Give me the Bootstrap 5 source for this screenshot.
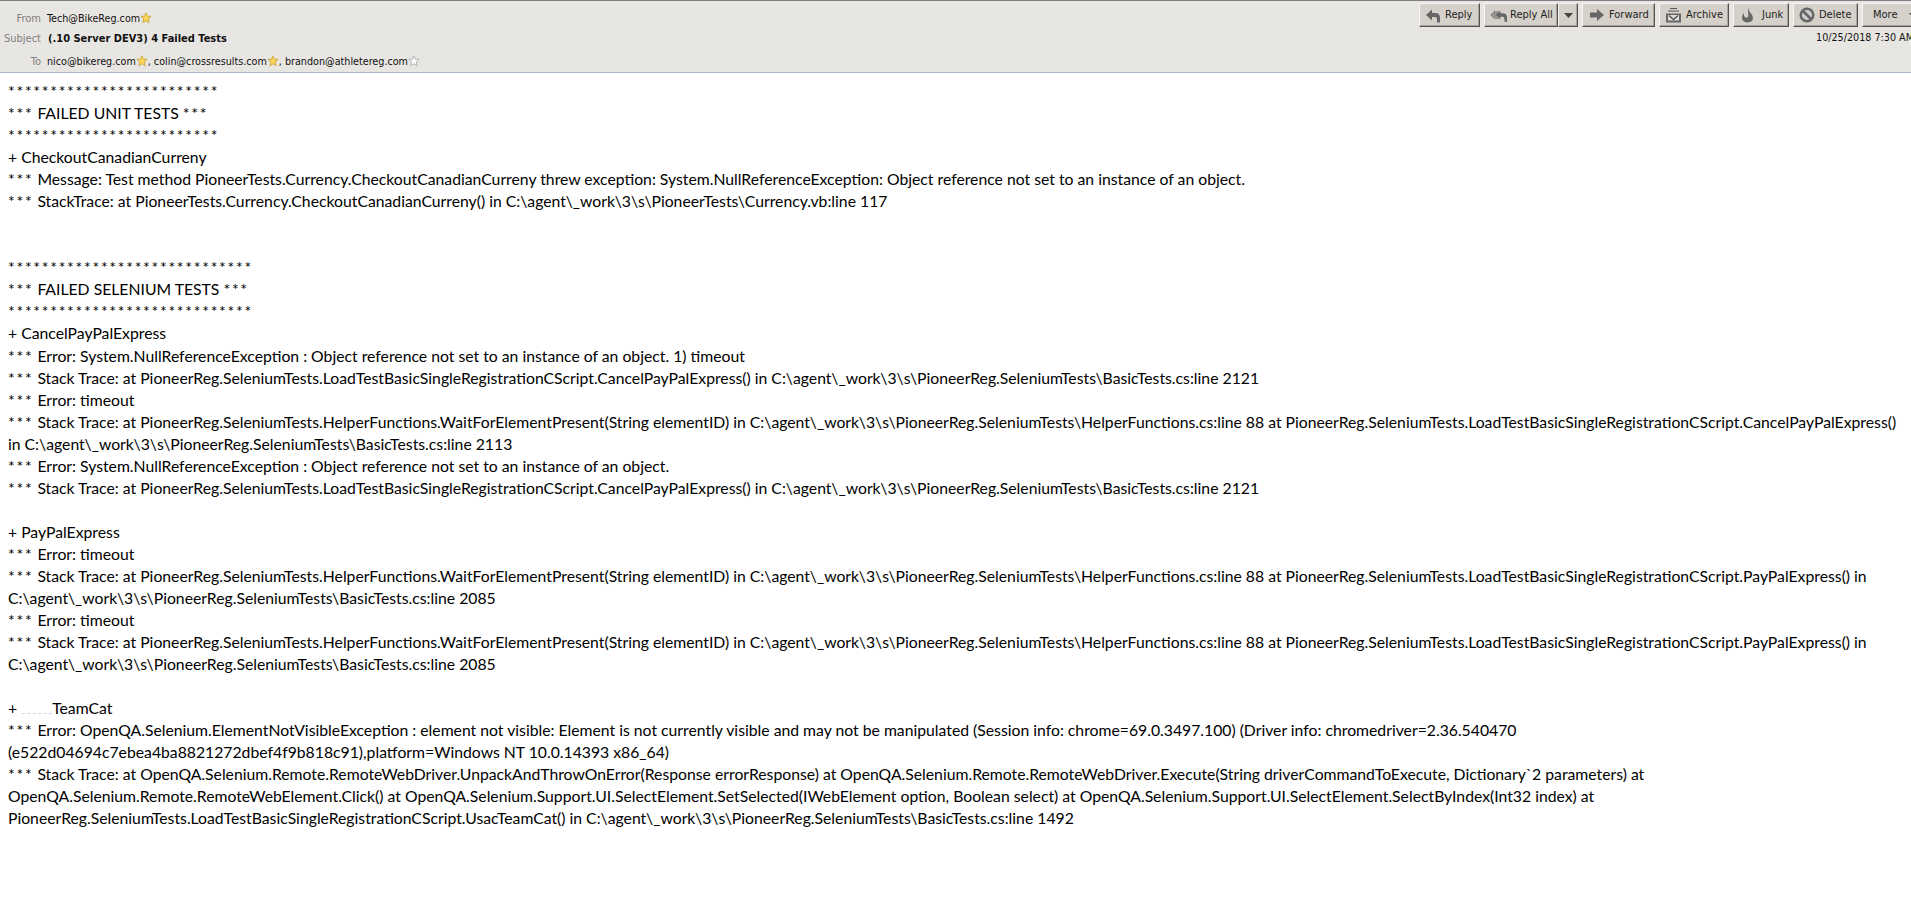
<!DOCTYPE html>
<html><head><meta charset="utf-8">
<link href="https://cdn.jsdelivr.net/npm/bootstrap@5.3.0/dist/css/bootstrap.min.css" rel="stylesheet">
<style>
html,body{height:100%;overflow:hidden;background:#fff}
.mailhead{height:73px;background:#e8e6e2;border-top:1px solid #7f7f7f;border-bottom:1px solid #a9b6cc;font:10.7px/14px "DejaVu Sans Condensed","Open Sans",sans-serif;color:#111;overflow:hidden}
.meta{padding-top:11px}
.metarow{height:21px}
.metarow.firstrow{height:20px}
.metarow.lastrow{margin-top:2px}
.lbl{width:41px;text-align:right;color:#808080;margin-right:6px;flex:none;font-size:11px}
.subj{font-weight:700;font-size:11px;margin-left:1px}
.star{width:12px;height:12px;flex:none}
.tools{padding-top:2px;width:492px;flex:none}
.tbtn{height:24px;background:#d5d1ca;border:1px solid;border-color:#f7f6f3 #55524c #55524c #f7f6f3;box-shadow:inset -1px -1px 0 #a8a59e;font:11px/20px "DejaVu Sans Condensed","Open Sans",sans-serif;color:#222;padding:0 0 0 5px;white-space:nowrap;gap:4px;flex:none}
.tbtn svg{flex:none}
.w-reply{width:61px}.w-all{width:74px;gap:2px}.w-dd{width:20px;justify-content:center;padding:0}.w-fwd{width:73px;gap:5px;padding-left:7px}.w-arc{width:70px;padding-left:5px}.w-junk{width:56px;gap:8px;padding-left:7px}.w-del{width:65px}.w-more{width:60px;padding-left:10px;gap:11px}
.tgap{gap:4px}
.stamp{font-size:10.7px;text-align:right;white-space:nowrap;padding-top:4px;margin-right:-3px}
.mailbody{padding:7px 0 0 8px;font:15.76px/22.04px Lato,"Open Sans",sans-serif;color:#000;white-space:nowrap}
.blk{height:22.04px}
.ast{letter-spacing:1.75px}
.ghost{display:inline-block;width:30px;height:6px;margin-left:1px;border-bottom:1px dashed #d4d4d4}
</style></head><body>
<div class="mailhead d-flex justify-content-between">
<div class="meta">
<div class="metarow firstrow d-flex"><span class="lbl">From</span><span>Tech@BikeReg.com</span><svg class="star" viewBox="0 0 14 14"><path d="M7 1l1.800 4H13L9.700 8l1 4.500L7 10.200 3.300 12.500l1-4.500L1 5h4.200z" fill="#fbd65a" stroke="#c9a33a"/></svg></div>
<div class="metarow d-flex"><span class="lbl">Subject</span><span class="subj">(.10 Server DEV3) 4 Failed Tests</span></div>
<div class="metarow lastrow d-flex"><span class="lbl">To</span><span>nico@bikereg.com</span><svg class="star" viewBox="0 0 14 14"><path d="M7 1l1.800 4H13L9.700 8l1 4.500L7 10.200 3.300 12.500l1-4.500L1 5h4.200z" fill="#fbd65a" stroke="#c9a33a"/></svg><span>, colin@crossresults.com</span><svg class="star" viewBox="0 0 14 14"><path d="M7 1l1.800 4H13L9.700 8l1 4.500L7 10.200 3.300 12.500l1-4.500L1 5h4.200z" fill="#fbd65a" stroke="#c9a33a"/></svg><span>, brandon@athletereg.com</span><svg class="star" viewBox="0 0 14 14"><path d="M7 1l1.800 4H13L9.700 8l1 4.500L7 10.200 3.300 12.500l1-4.500L1 5h4.200z" fill="#fff" stroke="#aaa"/></svg></div>
</div>
<div class="tools">
<div class="d-flex tgap">
<div class="tbtn w-reply d-flex align-items-center"><svg width="16" height="15" viewBox="0 0 16 15"><path d="M1 7l6-5.500V5h3q5 0 5 5v4.500h-3V11q0-2-2-2H7v3.500z" fill="#666"/></svg>Reply</div>
<div class="d-flex"><div class="tbtn w-all d-flex align-items-center"><svg width="18" height="15" viewBox="0 0 20 15"><path d="M6 2.500L1.500 7 6 11.500M9 2.500L4.500 7 9 11.500" fill="none" stroke="#777" stroke-width="1.400"/><path d="M6 7l5.500-5V5H14q5 0 5 5v4.500h-3V11q0-2-2-2h-2.500v3z" fill="#666"/></svg>Reply All</div><div class="tbtn w-dd d-flex align-items-center"><svg width="9" height="5" viewBox="0 0 9 5"><path d="M0 0h9L4.500 5z" fill="#444"/></svg></div></div>
<div class="tbtn w-fwd d-flex align-items-center"><svg width="14" height="12" viewBox="0 0 14 12"><path d="M0 3.500h7V0l7 6-7 6V8.500H0z" fill="#666"/></svg>Forward</div>
<div class="tbtn w-arc d-flex align-items-center"><svg width="17" height="15" viewBox="0 0 17 15"><path d="M5 .5h7M3 3h11" stroke="#555" fill="none"/><path d="M1 5.500h15v9H1z" fill="#666"/><path d="M3 7h11v5.500H3z" fill="#ddd"/><path d="M4 7.500l4.500 4 4.500-4" fill="none" stroke="#555" stroke-width="1.500"/></svg>Archive</div>
<div class="tbtn w-junk d-flex align-items-center"><svg width="13" height="16" viewBox="0 0 13 16"><path d="M8 1q0 3 1 4.500 3 2.500 3 5.500 0 4-5.500 4.500Q1 15 1 10.500 1 8 3 6q-.5 3 1 4 1.500 1.500 3 0 1-2 0-4.500Q7 3 8 1z" fill="#666"/></svg>Junk</div>
<div class="tbtn w-del d-flex align-items-center"><svg width="16" height="16" viewBox="0 0 16 16"><circle cx="8" cy="8" r="6.300" fill="#ccc" stroke="#666" stroke-width="2.500"/><path d="M3.500 3.500l9 9" stroke="#666" stroke-width="2.600"/></svg>Delete</div>
<div class="tbtn w-more d-flex align-items-center">More<svg width="9" height="5" viewBox="0 0 9 5"><path d="M0 0h9L4.500 5z" fill="#444"/></svg></div>
</div>
<div class="stamp">10/25/2018 7:30 AM</div>
</div>
</div>
<div class="mailbody">
<div class="ast">*************************</div>
<div><span class="ast">***</span> FAILED UNIT TESTS <span class="ast">***</span></div>
<div class="ast">*************************</div>
<div>+ CheckoutCanadianCurreny</div>
<div><span class="ast">***</span> Message: Test method PioneerTests.Currency.CheckoutCanadianCurreny threw exception: System.NullReferenceException: Object reference not set to an instance of an object.</div>
<div><span class="ast">***</span> StackTrace: at PioneerTests.Currency.CheckoutCanadianCurreny() in C:\agent\_work\3\s\PioneerTests\Currency.vb:line 117</div>
<div class="blk"></div><div class="blk"></div>
<div class="ast">*****************************</div>
<div><span class="ast">***</span> FAILED SELENIUM TESTS <span class="ast">***</span></div>
<div class="ast">*****************************</div>
<div>+ CancelPayPalExpress</div>
<div><span class="ast">***</span> Error: System.NullReferenceException : Object reference not set to an instance of an object. 1) timeout</div>
<div><span class="ast">***</span> Stack Trace: at PioneerReg.SeleniumTests.LoadTestBasicSingleRegistrationCScript.CancelPayPalExpress() in C:\agent\_work\3\s\PioneerReg.SeleniumTests\BasicTests.cs:line 2121</div>
<div><span class="ast">***</span> Error: timeout</div>
<div><span class="ast">***</span> Stack Trace: at PioneerReg.SeleniumTests.HelperFunctions.WaitForElementPresent(String elementID) in C:\agent\_work\3\s\PioneerReg.SeleniumTests\HelperFunctions.cs:line 88 at PioneerReg.SeleniumTests.LoadTestBasicSingleRegistrationCScript.CancelPayPalExpress()</div>
<div>in C:\agent\_work\3\s\PioneerReg.SeleniumTests\BasicTests.cs:line 2113</div>
<div><span class="ast">***</span> Error: System.NullReferenceException : Object reference not set to an instance of an object.</div>
<div><span class="ast">***</span> Stack Trace: at PioneerReg.SeleniumTests.LoadTestBasicSingleRegistrationCScript.CancelPayPalExpress() in C:\agent\_work\3\s\PioneerReg.SeleniumTests\BasicTests.cs:line 2121</div>
<div class="blk"></div>
<div>+ PayPalExpress</div>
<div><span class="ast">***</span> Error: timeout</div>
<div><span class="ast">***</span> Stack Trace: at PioneerReg.SeleniumTests.HelperFunctions.WaitForElementPresent(String elementID) in C:\agent\_work\3\s\PioneerReg.SeleniumTests\HelperFunctions.cs:line 88 at PioneerReg.SeleniumTests.LoadTestBasicSingleRegistrationCScript.PayPalExpress() in</div>
<div>C:\agent\_work\3\s\PioneerReg.SeleniumTests\BasicTests.cs:line 2085</div>
<div><span class="ast">***</span> Error: timeout</div>
<div><span class="ast">***</span> Stack Trace: at PioneerReg.SeleniumTests.HelperFunctions.WaitForElementPresent(String elementID) in C:\agent\_work\3\s\PioneerReg.SeleniumTests\HelperFunctions.cs:line 88 at PioneerReg.SeleniumTests.LoadTestBasicSingleRegistrationCScript.PayPalExpress() in</div>
<div>C:\agent\_work\3\s\PioneerReg.SeleniumTests\BasicTests.cs:line 2085</div>
<div class="blk"></div>
<div>+ <span class="ghost"></span>TeamCat</div>
<div><span class="ast">***</span> Error: OpenQA.Selenium.ElementNotVisibleException : element not visible: Element is not currently visible and may not be manipulated (Session info: chrome=69.0.3497.100) (Driver info: chromedriver=2.36.540470</div>
<div>(e522d04694c7ebea4ba8821272dbef4f9b818c91),platform=Windows NT 10.0.14393 x86_64)</div>
<div><span class="ast">***</span> Stack Trace: at OpenQA.Selenium.Remote.RemoteWebDriver.UnpackAndThrowOnError(Response errorResponse) at OpenQA.Selenium.Remote.RemoteWebDriver.Execute(String driverCommandToExecute, Dictionary`2 parameters) at</div>
<div>OpenQA.Selenium.Remote.RemoteWebElement.Click() at OpenQA.Selenium.Support.UI.SelectElement.SetSelected(IWebElement option, Boolean select) at OpenQA.Selenium.Support.UI.SelectElement.SelectByIndex(Int32 index) at</div>
<div>PioneerReg.SeleniumTests.LoadTestBasicSingleRegistrationCScript.UsacTeamCat() in C:\agent\_work\3\s\PioneerReg.SeleniumTests\BasicTests.cs:line 1492</div>
</div>
<script src="https://cdn.jsdelivr.net/npm/bootstrap@5.3.0/dist/js/bootstrap.bundle.min.js"></script>
</body></html>
